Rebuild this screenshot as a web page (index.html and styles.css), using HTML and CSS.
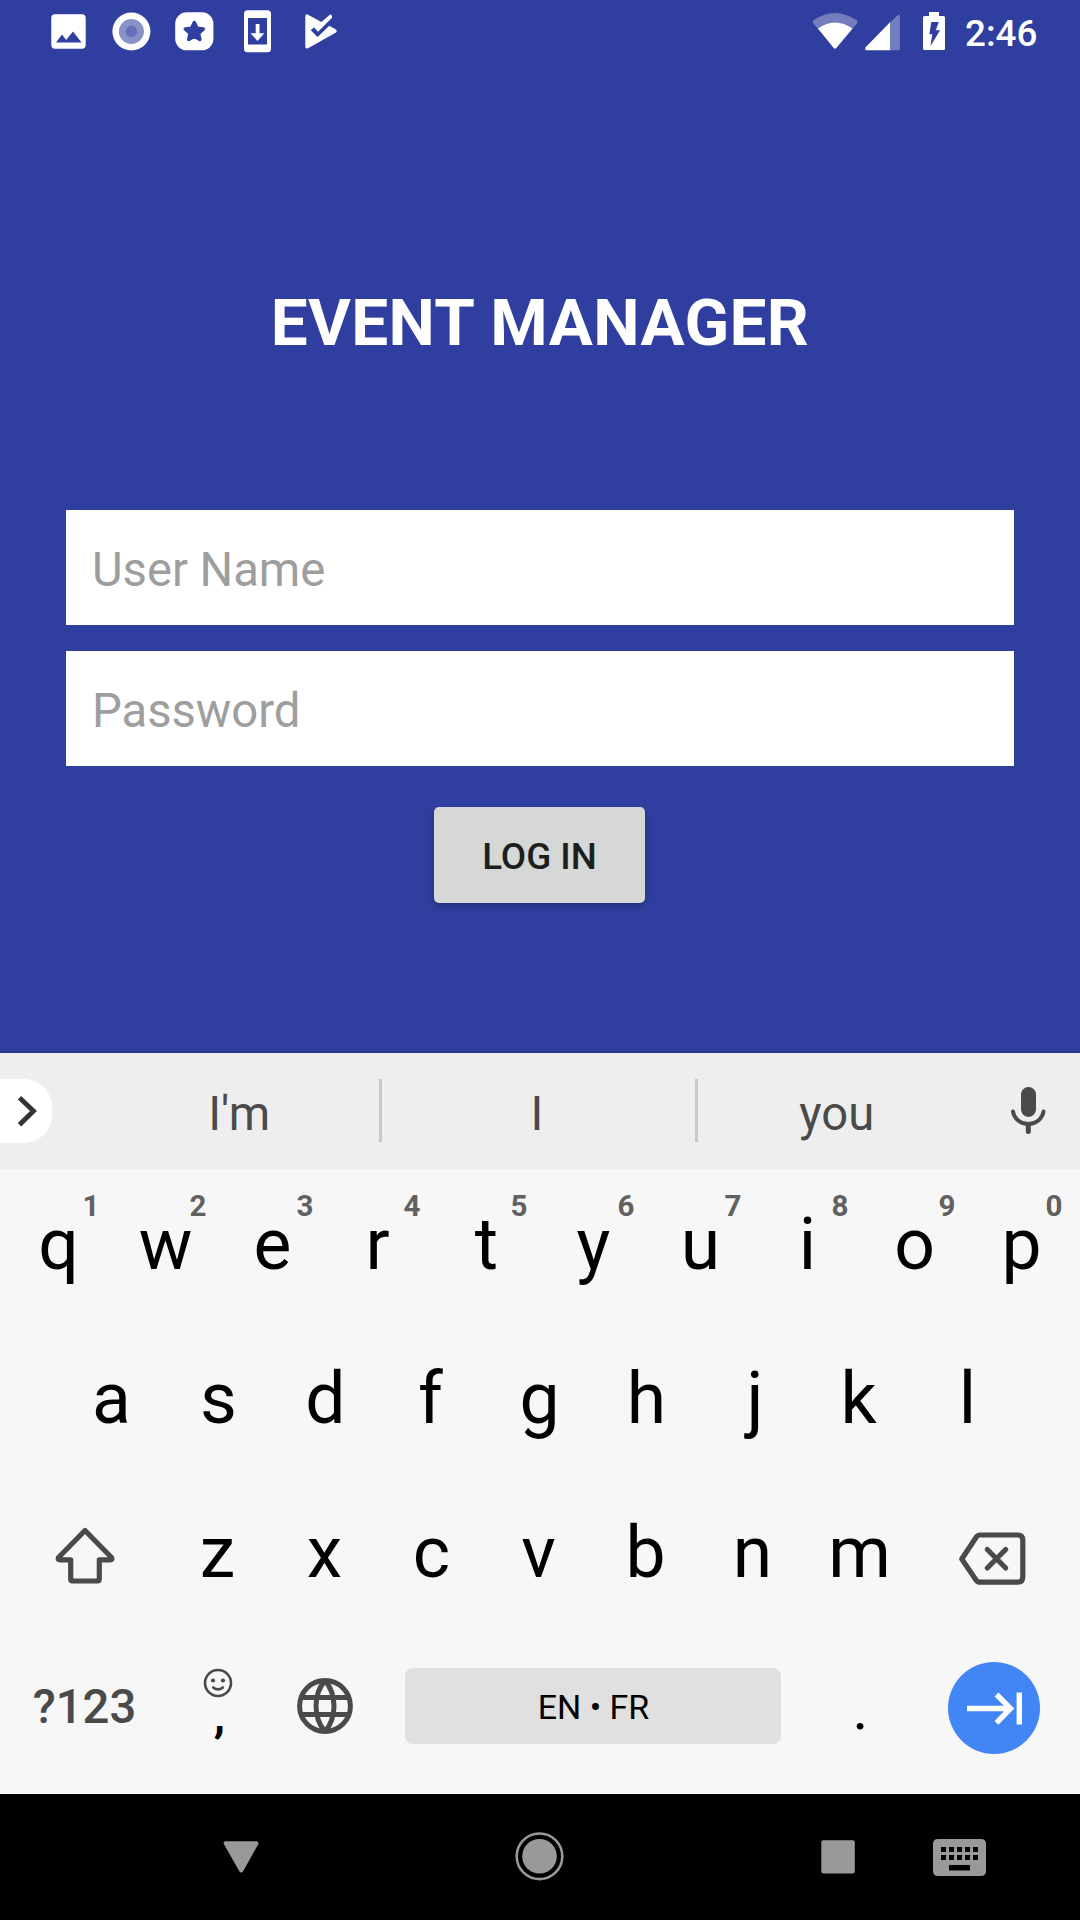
FILE: index.html
```html
<!DOCTYPE html>
<html lang="en">
<head>
<meta charset="utf-8">
<title>Event Manager</title>
<link rel="stylesheet" href="styles.css">
</head>
<body>
<div class="screen">
  <header class="status-bar">
    <div class="status-notifications">
      <svg class="status-icon" viewBox="37 0 63 63"><path fill="#fff" fill-rule="evenodd" d="M55 14.300h27a3.700 3.700 0 0 1 3.700 3.700v27a3.700 3.700 0 0 1-3.700 3.700H55a3.700 3.700 0 0 1-3.700-3.700V18a3.700 3.700 0 0 1 3.700-3.700zM56 42.500h25.500L73 31.500l-6.800 8.500-4.200-5.500z"/></svg>
      <svg class="status-icon" viewBox="100 0 63 63"><circle cx="131.400" cy="31.500" r="19" fill="#fff"/><circle cx="131.400" cy="31.500" r="12.500" fill="#8991c9"/><circle cx="131.400" cy="31.500" r="5.700" fill="#6670b8"/></svg>
      <svg class="status-icon" viewBox="163 0 63 63"><rect x="175.200" y="12.300" width="38.200" height="38" rx="11.500" fill="#fff"/><path fill="#303f9f" stroke="#303f9f" stroke-width="3.500" stroke-linejoin="round" d="M194.300 22.500l2.700 5.800 6.300.6-4.700 4.400 1.300 6.200-5.600-3.200-5.600 3.200 1.300-6.200-4.700-4.400 6.300-.6z"/></svg>
      <svg class="status-icon" viewBox="226 0 63 63"><path fill="#fff" fill-rule="evenodd" d="M247.500 10.300h20a3.500 3.500 0 0 1 3.500 3.500v34.900a3.500 3.500 0 0 1-3.500 3.500h-20a3.500 3.500 0 0 1-3.500-3.500V13.800a3.500 3.500 0 0 1 3.500-3.500zM248 18v26.500h19V18z"/><path fill="#fff" d="M255.700 24h3.800v9.200h4.800L257.500 41l-7-7.800h5.200z"/></svg>
      <svg class="status-icon" viewBox="289 0 63 63"><path fill="#fff" d="M307.500 14.500L321.500 22 329.800 14.800Q331 14.200 331.700 15.500L332.300 17.500 318 31.800 314 27.300 310.800 30.200 317.600 37 329.300 25.800 336 29.500Q337.700 31 336 32.500L308 48.200Q305.300 49 305.300 46.500V16.500Q305.300 13.800 307.500 14.500z"/></svg>
    </div>
    <div class="status-system">
      <svg class="wifi-icon" viewBox="808 0 54 63"><path fill="#757ebd" d="M813 20.500Q812 22 813.500 23.500L835 49 857 23.500Q858 22 857 20.500 835 5.500 813 20.500z"/><path fill="#fff" d="M818 28.500Q835 16.500 852.500 28.500L836.300 48Q835 49.500 833.700 48z"/></svg>
      <svg class="signal-icon" viewBox="862 0 41 63"><path fill="#757ebd" d="M890 22.500l7.700-7.300q1.500-.8 2.200.7V49q0 1.200-1.200 1.200H890z"/><path fill="#fff" d="M890 22.200v28h-24q-1.500-.7-.6-2.800z"/></svg>
      <svg class="battery-icon" viewBox="903 0 60 63"><path fill="#fff" fill-rule="evenodd" d="M929 12h10v4h4.500q1.500 0 1.500 1.500v31q0 1.500-1.500 1.500h-19q-1.500 0-1.500-1.500v-31q0-1.500 1.500-1.500h4.500zM931.300 22l-2 12.300h3L930.500 46l9.600-15.700h-4.300l3-8.300z"/></svg>
      <span class="clock">2:46</span>
    </div>
  </header>

  <main class="login">
    <h1 class="login-title">EVENT MANAGER</h1>
    <form class="login-form">
      <input class="login-field" type="text" placeholder="User Name">
      <input class="login-field" type="password" placeholder="Password">
      <button class="login-button" type="button">LOG IN</button>
    </form>
  </main>

  <section class="keyboard">
    <div class="suggestions">
      <span class="expander"><svg class="chevron" viewBox="0 0 52 64"><path fill="none" stroke="#333" stroke-width="4.800" d="M19.500 18.800L33.500 32 19.500 45.800"/></svg></span>
      <span class="suggestion">I'm</span>
      <span class="divider"></span>
      <span class="suggestion suggestion-main">I</span>
      <span class="divider"></span>
      <span class="suggestion">you</span>
      <svg class="mic-icon" viewBox="976 1053 104 116"><rect x="1021" y="1087" width="15" height="30" rx="7.400" fill="#4a4a4a"/><path fill="none" stroke="#4a4a4a" stroke-width="4" stroke-linecap="round" d="M1013 1111.500a15.400 14.500 0 0 0 30.500 0"/><path stroke="#4a4a4a" stroke-width="5" stroke-linecap="round" d="M1028.300 1126v5.500"/></svg>
    </div>

    <div class="key-row key-row-top">
      <span class="key">q<sup class="hint">1</sup></span>
      <span class="key">w<sup class="hint">2</sup></span>
      <span class="key">e<sup class="hint">3</sup></span>
      <span class="key key-narrow">r<sup class="hint">4</sup></span>
      <span class="key">t<sup class="hint">5</sup></span>
      <span class="key">y<sup class="hint">6</sup></span>
      <span class="key">u<sup class="hint">7</sup></span>
      <span class="key">i<sup class="hint">8</sup></span>
      <span class="key">o<sup class="hint">9</sup></span>
      <span class="key">p<sup class="hint">0</sup></span>
    </div>

    <div class="key-row key-row-middle">
      <span class="key">a</span>
      <span class="key">s</span>
      <span class="key">d</span>
      <span class="key key-narrow">f</span>
      <span class="key">g</span>
      <span class="key">h</span>
      <span class="key key-wide">j</span>
      <span class="key key-narrow">k</span>
      <span class="key">l</span>
    </div>

    <div class="key-row key-row-lower">
      <svg class="shift-key" viewBox="4 1475 160 155"><path fill="none" stroke="#4a4a4a" stroke-width="5.200" stroke-linejoin="round" d="M85 1530.500L58.500 1557.500Q57.500 1559.800 60 1559.800H70.700V1579Q70.700 1581 72.700 1581H97.300Q99.300 1581 99.300 1579V1559.800H110Q112.800 1559.800 111.500 1557.500z"/></svg>
      <span class="key">z</span>
      <span class="key">x</span>
      <span class="key">c</span>
      <span class="key">v</span>
      <span class="key">b</span>
      <span class="key">n</span>
      <span class="key">m</span>
      <svg class="delete-key" viewBox="914 1475 160 155"><path fill="none" stroke="#4a4a4a" stroke-width="5.200" stroke-linejoin="round" d="M981 1535H1019Q1023.800 1535 1023.800 1540V1577Q1023.800 1582.200 1019 1582.200H981Q978.500 1582.200 977 1580L962.800 1559 977 1537.500Q978.500 1535 981 1535z"/><path stroke="#4a4a4a" stroke-width="5.200" stroke-linecap="round" d="M988.300 1549.500l18.400 18.500m0-18.500l-18.400 18.500"/></svg>
    </div>

    <div class="key-row key-row-bottom">
      <span class="symbols-key">?123</span>
      <span class="comma-key">
        <svg class="smiley" viewBox="0 0 30 30"><circle cx="15" cy="15" r="13" fill="none" stroke="#4a4a4a" stroke-width="2.600"/><circle cx="10" cy="12.500" r="2.100" fill="#4a4a4a"/><circle cx="20" cy="12.500" r="2.100" fill="#4a4a4a"/><path fill="none" stroke="#4a4a4a" stroke-width="2.600" stroke-linecap="round" d="M10.200 19.500q4.800 3.800 9.600 0"/></svg>
        <span class="comma">,</span>
      </span>
      <svg class="globe-key" viewBox="271 1653 107 106"><g fill="none" stroke="#4a4a4a" stroke-width="5"><circle cx="325" cy="1706" r="25.400"/><path d="M301 1697.600h48M301 1714.500h48M325 1680.500c-12 14-12 37 0 51M325 1680.500c12 14 12 37 0 51"/></g></svg>
      <span class="space-key">EN • FR</span>
      <span class="period-key">.</span>
      <span class="next-key"><svg class="next-icon" viewBox="948 1662 92 92"><path fill="none" stroke="#fff" stroke-width="5.400" d="M967 1708.500h43M996.500 1694.500l14 14-14 14.300M1019.300 1692.500v32"/></svg></span>
    </div>
  </section>

  <nav class="nav-bar">
    <svg class="nav-icon" viewBox="178 1794 126 126"><path fill="#999" stroke="#999" stroke-width="4" stroke-linejoin="round" d="M225.700 1843.200h30.800L241.200 1870.500z"/></svg>
    <svg class="nav-icon" viewBox="476.500 1794 126 126"><circle cx="539" cy="1856.300" r="22.800" fill="none" stroke="#999" stroke-width="2.600"/><circle cx="539" cy="1856.300" r="17.300" fill="#999"/></svg>
    <svg class="nav-icon" viewBox="775 1794 126 126"><rect x="821.300" y="1840.300" width="33.500" height="33.300" rx="2" fill="#999"/></svg>
    <svg class="nav-keyboard" viewBox="901 1794 116 126"><path fill="#999" fill-rule="evenodd" d="M938 1839h43q5 0 5 5v27q0 5-5 5h-43q-5 0-5-5v-27q0-5 5-5zM941 1847v5h5v-5zm8 0v5h5v-5zm8 0v5h5v-5zm8 0v5h5v-5zm8 0v5h5v-5zM941 1855v5h5v-5zm8 0v5h5v-5zm8 0v5h5v-5zm8 0v5h5v-5zm8 0v5h5v-5zM949 1865v5.500h21V1865z"/></svg>
  </nav>
</div>
</body>
</html>
```
FILE: styles.css
```css
* {
  box-sizing: border-box;
}

body {
  margin: 0;
  font-family: Roboto, "Liberation Sans", sans-serif;
}

svg {
  display: block;
  flex: none;
}

.screen {
  display: flex;
  flex-direction: column;
  width: 1080px;
  height: 1920px;
  overflow: hidden;
  background: #303f9f;
}

/* Status bar */
.status-bar {
  display: flex;
  flex: none;
  justify-content: space-between;
  height: 63px;
  padding-left: 37px;
}

.status-notifications,
.status-system {
  display: flex;
  align-items: center;
}

.status-system {
  width: 272px;
}

.status-icon {
  width: 63px;
  height: 63px;
}

.wifi-icon {
  width: 54px;
  height: 63px;
}

.signal-icon {
  width: 41px;
  height: 63px;
}

.battery-icon {
  width: 60px;
  height: 63px;
}

.clock {
  padding: 4px 0 0 2px;
  color: #fff;
  font-size: 36.75px;
  font-weight: 500;
  line-height: 59px;
}

/* Login form */
.login {
  display: flex;
  flex: none;
  flex-direction: column;
  height: 990px;
  padding: 220px 66px 0;
}

.login-title {
  margin: 0 0 147px;
  color: #fff;
  font-size: 65.625px;
  font-weight: 700;
  letter-spacing: 0.4px;
  line-height: 80px;
  text-align: center;
}

.login-form {
  display: flex;
  flex-direction: column;
  align-items: center;
  gap: 26px;
}

.login-field {
  width: 948px;
  height: 115px;
  padding: 5px 26px 0;
  border: 0;
  border-radius: 0;
  background: #fff;
  font-family: inherit;
  font-size: 47.25px;
  letter-spacing: -0.05px;
}

.login-field::placeholder {
  color: #9e9e9e;
  opacity: 1;
}

.login-button {
  width: 211px;
  height: 96px;
  margin: 15px 1px 0 0;
  padding: 2px 0 0;
  border: 0;
  border-radius: 5px;
  background: #d6d7d7;
  box-shadow: 0 3px 6px rgba(0, 0, 0, 0.26);
  color: #1d1e1e;
  font-family: inherit;
  font-size: 36.75px;
  font-weight: 500;
}

/* Keyboard */
.keyboard {
  flex: none;
  height: 741px;
  background: #f7f7f7;
  box-shadow: 0 -1px 4px rgba(0, 0, 0, 0.2);
}

.suggestions {
  display: flex;
  align-items: center;
  height: 116px;
  background: #eee;
}

.expander {
  width: 52px;
  height: 64px;
  margin-right: 48px;
  border-radius: 0 28px 28px 0;
  background: #fff;
}

.chevron {
  width: 52px;
  height: 64px;
}

.suggestion {
  flex: 1;
  padding-top: 5px;
  color: #4a4a4a;
  font-size: 47.25px;
  line-height: 60px;
  text-align: center;
}

.suggestion-main {
  flex: none;
  width: 313px;
  padding-right: 2px;
}

.divider {
  width: 3px;
  height: 63px;
  margin-bottom: 2px;
  background: #c8c8c8;
}

.mic-icon {
  width: 104px;
  height: 116px;
}

.key-row {
  display: flex;
  align-items: center;
}

.key-row-top {
  height: 152px;
  padding: 0 5px 1px;
}

.key-row-middle {
  height: 154px;
  padding: 2px 58px 0;
}

.key-row-lower {
  height: 155px;
  padding: 0 6px 0 4px;
}

.key-row-bottom {
  height: 164px;
  padding-bottom: 12px;
}

.key {
  position: relative;
  flex: none;
  width: 107px;
  color: #000;
  font-size: 71.4px;
  line-height: 84px;
  text-align: center;
}

.key-narrow {
  padding-right: 4px;
}

.key-wide {
  padding-left: 3px;
}

/* Secondary character in the upper right of a key */
.hint {
  position: absolute;
  top: -14px;
  right: 11px;
  width: 20px;
  color: #616161;
  font-size: 29.5px;
  font-weight: 700;
  line-height: 34px;
  text-align: center;
}

.shift-key,
.delete-key {
  width: 160px;
  height: 155px;
}

.symbols-key {
  width: 164px;
  padding: 2px 0 0 5px;
  color: #4a4a4a;
  font-size: 47.25px;
  font-weight: 500;
  text-align: center;
}

.comma-key {
  display: flex;
  flex-direction: column;
  align-items: center;
  width: 107px;
  height: 106px;
  padding-top: 15px;
}

.smiley {
  width: 30px;
  height: 30px;
}

.comma {
  padding: 6px 0 0 4px;
  color: #000;
  font-size: 46px;
  font-weight: 700;
  line-height: 24px;
}

.globe-key {
  width: 107px;
  height: 106px;
}

.space-key {
  width: 376px;
  height: 76px;
  margin-left: 27px;
  padding-left: 1px;
  border-radius: 8px;
  background: #e0e0e0;
  color: #000;
  font-size: 34px;
  line-height: 78px;
  text-align: center;
}

.period-key {
  width: 158px;
  padding: 6px 0 0 1px;
  color: #000;
  font-size: 60px;
  line-height: 70px;
  text-align: center;
}

.next-key {
  width: 92px;
  height: 92px;
  margin: 4px 0 0 9px;
  border-radius: 50%;
  background: #4285f4;
}

.next-icon {
  width: 92px;
  height: 92px;
}

/* Navigation bar */
.nav-bar {
  display: flex;
  flex: none;
  height: 126px;
  gap: 172.5px;
  padding-left: 178px;
  background: #000;
}

.nav-icon {
  width: 126px;
  height: 126px;
}

.nav-keyboard {
  width: 116px;
  height: 126px;
  margin-left: -172.5px;
}
```
